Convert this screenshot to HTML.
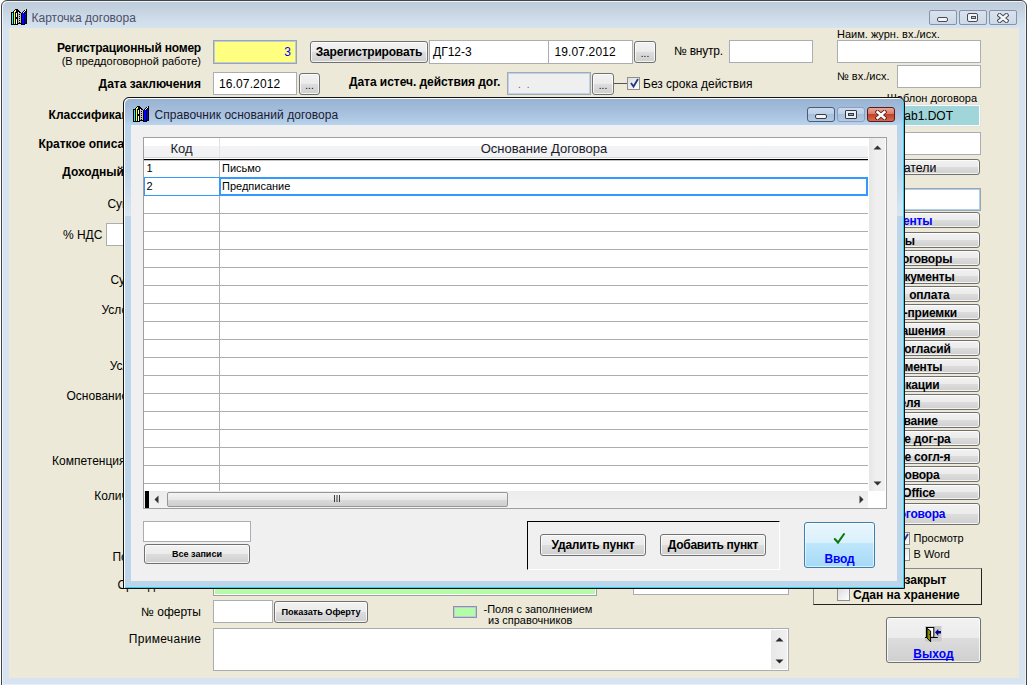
<!DOCTYPE html>
<html><head><meta charset="utf-8">
<style>
*{box-sizing:border-box;margin:0;padding:0}
html,body{width:1031px;height:685px;overflow:hidden;background:#fff;font-family:"Liberation Sans",sans-serif;color:#000}
.a{position:absolute}
.win{left:1px;top:0;width:1026px;height:700px;border:1px solid #444;border-radius:6px 6px 0 0;box-shadow:inset 1px 1px 0 #eef3f9,inset -1px 0 0 #eef3f9;background:linear-gradient(#bccbdb 0,#c2d0de 6px,#cfdcea 18px,#d6e3f1 28px,#d7e3f1 100%)}
.client{left:9px;top:28px;width:1010px;height:650px;background:#ECE9D8}
.tb{background:#fff;border:1px solid #abadb3}
.lbl{font-size:12px;white-space:nowrap;line-height:14px}
.b{font-weight:bold;letter-spacing:-0.2px}
.btn{border:1px solid #707070;border-radius:3px;box-shadow:inset 0 0 0 1px rgba(255,255,255,.75);background:linear-gradient(#f2f2f2 0,#ebebeb 50%,#dddddd 50%,#cfcfcf 100%);font-size:12px;text-align:center;white-space:nowrap}
.r{text-align:right}
.capb{border:1px solid #8592aa;border-radius:2px;background:linear-gradient(#d9e3ef 0,#d3deea 50%,#cdd9e7 100%)}
.dcap{border:1px solid #4e5b74;border-radius:3px;background:linear-gradient(#cadbee 0,#bcd0e8 45%,#a6bfdc 50%,#b5cbe4 100%)}
.chk{width:13px;height:13px;border:1px solid #8f8f8f;background:linear-gradient(135deg,#dcdcdc,#fff)}
</style></head><body>
<div class="a win"></div>
<div class="a client"></div>
<div class="a" style="left:2px;top:684px;width:1024px;height:1px;background:#e9eff7"></div>
<div class="a lbl" style="left:31.5px;top:10.5px;color:#4c4f66">Карточка договора</div>
<!-- main window title controls -->
<div class="a capb" style="left:929px;top:10px;width:28px;height:15px"><div class="a" style="left:7px;top:6px;width:11px;height:5px;border:1px solid #454b58;background:#f4f4f4;border-radius:2px"></div></div>
<div class="a capb" style="left:959px;top:10px;width:28px;height:15px"><div class="a" style="left:7px;top:2px;width:11px;height:9px;border:1.5px solid #454b58;background:#f4f4f4;border-radius:2px"><div class="a" style="left:2.5px;top:1.5px;width:5px;height:3px;border:1px solid #454b58;background:#b8c4d4"></div></div></div>
<div class="a capb" style="left:989px;top:10px;width:28px;height:15px"><svg class="a" style="left:6.5px;top:2px" width="12" height="10" viewBox="0 0 12 10"><path d="M2.6 2.2 L9.4 7.8 M9.4 2.2 L2.6 7.8" stroke="#454b58" stroke-width="4.4" stroke-linecap="square"/><path d="M2.6 2.2 L9.4 7.8 M9.4 2.2 L2.6 7.8" stroke="#f6f6f6" stroke-width="2.5" stroke-linecap="square"/></svg></div>
<!-- icon main -->
<svg class="a" style="left:11px;top:9px" width="16" height="16" viewBox="0 0 16 16" shape-rendering="crispEdges"><rect x="4" y="0" width="3" height="1" fill="#000"/><rect x="15" y="0" width="1" height="1" fill="#000"/><rect x="3" y="1" width="1" height="1" fill="#000"/><rect x="4" y="1" width="1" height="1" fill="#ffffff"/><rect x="5" y="1" width="3" height="1" fill="#000"/><rect x="13" y="1" width="1" height="1" fill="#000"/><rect x="14" y="1" width="1" height="1" fill="#ffffff"/><rect x="15" y="1" width="1" height="1" fill="#000"/><rect x="2" y="2" width="1" height="1" fill="#000"/><rect x="3" y="2" width="1" height="1" fill="#ffffff"/><rect x="4" y="2" width="1" height="1" fill="#ffff00"/><rect x="5" y="2" width="4" height="1" fill="#000"/><rect x="12" y="2" width="1" height="1" fill="#000"/><rect x="13" y="2" width="1" height="1" fill="#ffffff"/><rect x="14" y="2" width="2" height="1" fill="#000"/><rect x="0" y="3" width="3" height="1" fill="#000"/><rect x="3" y="3" width="1" height="1" fill="#ffff00"/><rect x="4" y="3" width="3" height="1" fill="#000"/><rect x="7" y="3" width="1" height="1" fill="#ffffff"/><rect x="8" y="3" width="2" height="1" fill="#000"/><rect x="11" y="3" width="1" height="1" fill="#000"/><rect x="12" y="3" width="1" height="1" fill="#ffffff"/><rect x="13" y="3" width="1" height="1" fill="#000"/><rect x="14" y="3" width="1" height="1" fill="#0000ff"/><rect x="15" y="3" width="1" height="1" fill="#000"/><rect x="0" y="4" width="1" height="1" fill="#000"/><rect x="1" y="4" width="1" height="1" fill="#00ffff"/><rect x="2" y="4" width="1" height="1" fill="#000"/><rect x="3" y="4" width="1" height="1" fill="#ffff00"/><rect x="4" y="4" width="1" height="1" fill="#000"/><rect x="5" y="4" width="1" height="1" fill="#ffffff"/><rect x="6" y="4" width="1" height="1" fill="#000"/><rect x="7" y="4" width="3" height="1" fill="#c0c0c0"/><rect x="10" y="4" width="1" height="1" fill="#000"/><rect x="11" y="4" width="2" height="1" fill="#0000ff"/><rect x="13" y="4" width="1" height="1" fill="#000"/><rect x="14" y="4" width="1" height="1" fill="#0000ff"/><rect x="15" y="4" width="1" height="1" fill="#000"/><rect x="0" y="5" width="1" height="1" fill="#000"/><rect x="1" y="5" width="1" height="1" fill="#00ffff"/><rect x="2" y="5" width="1" height="1" fill="#000"/><rect x="3" y="5" width="1" height="1" fill="#ffff00"/><rect x="4" y="5" width="1" height="1" fill="#000"/><rect x="5" y="5" width="1" height="1" fill="#ffffff"/><rect x="6" y="5" width="1" height="1" fill="#000"/><rect x="7" y="5" width="1" height="1" fill="#c0c0c0"/><rect x="8" y="5" width="1" height="1" fill="#000"/><rect x="9" y="5" width="1" height="1" fill="#c0c0c0"/><rect x="10" y="5" width="1" height="1" fill="#000"/><rect x="11" y="5" width="2" height="1" fill="#0000ff"/><rect x="13" y="5" width="1" height="1" fill="#000"/><rect x="14" y="5" width="1" height="1" fill="#0000ff"/><rect x="15" y="5" width="1" height="1" fill="#000"/><rect x="0" y="6" width="1" height="1" fill="#000"/><rect x="1" y="6" width="1" height="1" fill="#00ffff"/><rect x="2" y="6" width="1" height="1" fill="#000"/><rect x="3" y="6" width="1" height="1" fill="#ffff00"/><rect x="4" y="6" width="1" height="1" fill="#000"/><rect x="5" y="6" width="1" height="1" fill="#ffffff"/><rect x="6" y="6" width="1" height="1" fill="#000"/><rect x="7" y="6" width="3" height="1" fill="#c0c0c0"/><rect x="10" y="6" width="1" height="1" fill="#000"/><rect x="11" y="6" width="2" height="1" fill="#0000ff"/><rect x="13" y="6" width="1" height="1" fill="#000"/><rect x="14" y="6" width="1" height="1" fill="#0000ff"/><rect x="15" y="6" width="1" height="1" fill="#000"/><rect x="0" y="7" width="1" height="1" fill="#000"/><rect x="1" y="7" width="1" height="1" fill="#00ffff"/><rect x="2" y="7" width="1" height="1" fill="#000"/><rect x="3" y="7" width="1" height="1" fill="#ffff00"/><rect x="4" y="7" width="1" height="1" fill="#000"/><rect x="5" y="7" width="1" height="1" fill="#ffffff"/><rect x="6" y="7" width="1" height="1" fill="#000"/><rect x="7" y="7" width="1" height="1" fill="#c0c0c0"/><rect x="8" y="7" width="1" height="1" fill="#000"/><rect x="9" y="7" width="1" height="1" fill="#c0c0c0"/><rect x="10" y="7" width="1" height="1" fill="#000"/><rect x="11" y="7" width="2" height="1" fill="#0000ff"/><rect x="13" y="7" width="1" height="1" fill="#000"/><rect x="14" y="7" width="1" height="1" fill="#0000ff"/><rect x="15" y="7" width="1" height="1" fill="#000"/><rect x="0" y="8" width="1" height="1" fill="#000"/><rect x="1" y="8" width="1" height="1" fill="#00ffff"/><rect x="2" y="8" width="1" height="1" fill="#000"/><rect x="3" y="8" width="1" height="1" fill="#ffff00"/><rect x="4" y="8" width="3" height="1" fill="#000"/><rect x="7" y="8" width="3" height="1" fill="#c0c0c0"/><rect x="10" y="8" width="1" height="1" fill="#000"/><rect x="11" y="8" width="2" height="1" fill="#0000ff"/><rect x="13" y="8" width="1" height="1" fill="#000"/><rect x="14" y="8" width="1" height="1" fill="#0000ff"/><rect x="15" y="8" width="1" height="1" fill="#000"/><rect x="0" y="9" width="1" height="1" fill="#000"/><rect x="1" y="9" width="1" height="1" fill="#00ffff"/><rect x="2" y="9" width="1" height="1" fill="#000"/><rect x="3" y="9" width="1" height="1" fill="#ffff00"/><rect x="4" y="9" width="3" height="1" fill="#000"/><rect x="7" y="9" width="1" height="1" fill="#c0c0c0"/><rect x="8" y="9" width="1" height="1" fill="#000"/><rect x="9" y="9" width="1" height="1" fill="#c0c0c0"/><rect x="10" y="9" width="1" height="1" fill="#000"/><rect x="11" y="9" width="2" height="1" fill="#0000ff"/><rect x="13" y="9" width="1" height="1" fill="#000"/><rect x="14" y="9" width="1" height="1" fill="#0000ff"/><rect x="15" y="9" width="1" height="1" fill="#000"/><rect x="0" y="10" width="1" height="1" fill="#000"/><rect x="1" y="10" width="1" height="1" fill="#00ffff"/><rect x="2" y="10" width="1" height="1" fill="#000"/><rect x="3" y="10" width="1" height="1" fill="#ffff00"/><rect x="4" y="10" width="1" height="1" fill="#000"/><rect x="5" y="10" width="1" height="1" fill="#ffffff"/><rect x="6" y="10" width="1" height="1" fill="#000"/><rect x="7" y="10" width="3" height="1" fill="#c0c0c0"/><rect x="10" y="10" width="1" height="1" fill="#000"/><rect x="11" y="10" width="2" height="1" fill="#0000ff"/><rect x="13" y="10" width="1" height="1" fill="#000"/><rect x="14" y="10" width="1" height="1" fill="#0000ff"/><rect x="15" y="10" width="1" height="1" fill="#000"/><rect x="0" y="11" width="1" height="1" fill="#000"/><rect x="1" y="11" width="1" height="1" fill="#00ffff"/><rect x="2" y="11" width="1" height="1" fill="#000"/><rect x="3" y="11" width="1" height="1" fill="#ffff00"/><rect x="4" y="11" width="1" height="1" fill="#000"/><rect x="5" y="11" width="1" height="1" fill="#ffffff"/><rect x="6" y="11" width="1" height="1" fill="#000"/><rect x="7" y="11" width="1" height="1" fill="#c0c0c0"/><rect x="8" y="11" width="1" height="1" fill="#000"/><rect x="9" y="11" width="1" height="1" fill="#c0c0c0"/><rect x="10" y="11" width="1" height="1" fill="#000"/><rect x="11" y="11" width="2" height="1" fill="#0000ff"/><rect x="13" y="11" width="1" height="1" fill="#000"/><rect x="14" y="11" width="1" height="1" fill="#0000ff"/><rect x="15" y="11" width="1" height="1" fill="#000"/><rect x="0" y="12" width="1" height="1" fill="#000"/><rect x="1" y="12" width="1" height="1" fill="#00ffff"/><rect x="2" y="12" width="1" height="1" fill="#000"/><rect x="3" y="12" width="1" height="1" fill="#ffff00"/><rect x="4" y="12" width="1" height="1" fill="#000"/><rect x="5" y="12" width="1" height="1" fill="#ffffff"/><rect x="6" y="12" width="1" height="1" fill="#000"/><rect x="7" y="12" width="3" height="1" fill="#c0c0c0"/><rect x="10" y="12" width="1" height="1" fill="#000"/><rect x="11" y="12" width="2" height="1" fill="#0000ff"/><rect x="13" y="12" width="1" height="1" fill="#000"/><rect x="14" y="12" width="1" height="1" fill="#0000ff"/><rect x="15" y="12" width="1" height="1" fill="#000"/><rect x="0" y="13" width="1" height="1" fill="#000"/><rect x="1" y="13" width="1" height="1" fill="#00ffff"/><rect x="2" y="13" width="1" height="1" fill="#000"/><rect x="3" y="13" width="1" height="1" fill="#ffff00"/><rect x="4" y="13" width="1" height="1" fill="#000"/><rect x="5" y="13" width="1" height="1" fill="#ffffff"/><rect x="6" y="13" width="1" height="1" fill="#000"/><rect x="7" y="13" width="1" height="1" fill="#c0c0c0"/><rect x="8" y="13" width="1" height="1" fill="#000"/><rect x="9" y="13" width="1" height="1" fill="#c0c0c0"/><rect x="10" y="13" width="1" height="1" fill="#000"/><rect x="11" y="13" width="2" height="1" fill="#0000ff"/><rect x="13" y="13" width="1" height="1" fill="#000"/><rect x="14" y="13" width="1" height="1" fill="#0000ff"/><rect x="15" y="13" width="1" height="1" fill="#000"/><rect x="0" y="14" width="1" height="1" fill="#000"/><rect x="1" y="14" width="1" height="1" fill="#00ffff"/><rect x="2" y="14" width="1" height="1" fill="#000"/><rect x="3" y="14" width="1" height="1" fill="#ffff00"/><rect x="4" y="14" width="1" height="1" fill="#000"/><rect x="5" y="14" width="1" height="1" fill="#ffffff"/><rect x="6" y="14" width="5" height="1" fill="#000"/><rect x="11" y="14" width="2" height="1" fill="#0000ff"/><rect x="13" y="14" width="3" height="1" fill="#000"/><rect x="0" y="15" width="7" height="1" fill="#000"/><rect x="10" y="15" width="4" height="1" fill="#000"/></svg>

<!-- row 1 -->
<div class="a lbl b r" style="left:40px;width:161px;top:41px">Регистрационный номер</div>
<div class="a lbl r" style="left:40px;width:161px;top:54.3px;font-size:11px">(В преддоговорной работе)</div>
<div class="a" style="left:213px;top:40px;width:84px;height:24px;background:#ffff80;border:1px solid #a2a2a2;box-shadow:inset 0 0 0 1px #b4cce8"></div>
<div class="a lbl" style="left:213px;top:45px;width:78px;text-align:right;color:#0000ff">3</div>
<div class="a btn b" style="left:310px;top:41px;width:118px;height:22px;line-height:20.5px">Зарегистрировать</div>
<div class="a tb" style="left:429px;top:40px;width:120px;height:24px"></div>
<div class="a lbl" style="left:433px;top:45px">ДГ12-3</div>
<div class="a tb" style="left:548px;top:40px;width:85px;height:24px"></div>
<div class="a lbl" style="left:554.5px;top:45px;letter-spacing:0.12px">19.07.2012</div>
<div class="a btn" style="left:634px;top:41px;width:22px;height:22px;line-height:24px;font-size:10px">...</div>
<div class="a lbl" style="left:674px;top:43.5px;letter-spacing:-0.25px">№ внутр.</div>
<div class="a tb" style="left:729px;top:40px;width:84px;height:23px"></div>

<!-- row 2 -->
<div class="a lbl b r" style="left:40px;width:161px;top:77px;letter-spacing:0">Дата заключения</div>
<div class="a tb" style="left:213px;top:72px;width:84px;height:23px"></div>
<div class="a lbl" style="left:219px;top:77px;letter-spacing:0.12px">16.07.2012</div>
<div class="a btn" style="left:299px;top:73px;width:21px;height:22px;line-height:24px;font-size:10px">...</div>
<div class="a lbl b" style="left:349px;top:74.5px;letter-spacing:-0.05px">Дата истеч. действия дог.</div>
<div class="a" style="left:507px;top:72px;width:84px;height:23px;background:#efefef;border:1px solid #a9a9a9;box-shadow:inset 0 0 0 1px #b5d5f3"></div>
<div class="a lbl" style="left:518px;top:78px;color:#6a5a70;font-size:10px;letter-spacing:1.6px">. .</div>
<div class="a btn" style="left:592px;top:73px;width:22px;height:22px;line-height:24px;font-size:10px">...</div>
<div class="a" style="left:614px;top:83px;width:14px;height:1px;background:#555"></div>
<div class="a chk" style="left:627px;top:77px"><svg class="a" style="left:1px;top:0" width="11" height="11" viewBox="0 0 11 11"><path d="M2 5 L4.5 8.5 L9 1" stroke="#1c3a80" stroke-width="1.8" fill="none"/></svg></div>
<div class="a lbl" style="left:643px;top:76.7px">Без срока действия</div>

<!-- right column top -->
<div class="a lbl" style="left:837px;top:27px;font-size:11px">Наим. журн. вх./исх.</div>
<div class="a tb" style="left:837px;top:40px;width:144px;height:23px"></div>
<div class="a lbl" style="left:837px;top:69px;font-size:11px">№ вх./исх.</div>
<div class="a tb" style="left:897px;top:65px;width:84px;height:23px"></div>
<div class="a lbl r" style="left:800px;width:177px;top:91px;font-size:11px">Шаблон договора</div>
<div class="a" style="left:837px;top:104px;width:144px;height:23px;background:#a0d6da;border:1px solid #e2e2e2;box-shadow:inset 0 0 0 1px #fbfbfb"></div>
<div class="a lbl r" style="left:800px;width:153px;top:109px">CONTtab1.DOT</div>
<div class="a tb" style="left:837px;top:132px;width:144px;height:23px"></div>


<div class="a btn" style="left:813px;top:159px;width:167px;height:16px"></div><div class="a lbl r" style="left:700px;width:236.3px;top:160.5px;font-size:12.3px">Обязатели</div>
<div class="a tb" style="left:837px;top:188px;width:144px;height:23px;border-color:#a4a4a4;box-shadow:inset 0 0 0 1px #a9cff2"></div>
<div class="a btn" style="left:813px;top:212px;width:167px;height:16px"></div><div class="a lbl b r" style="left:700px;width:232.3px;top:213.5px;color:#0000ff">Контрагенты</div>
<div class="a btn" style="left:813px;top:232px;width:167px;height:16px"></div>
<div class="a lbl b r" style="left:700px;width:214.8px;top:233.5px;font-size:12px">Платежи ы</div>
<div class="a btn" style="left:813px;top:250px;width:167px;height:16px"></div>
<div class="a lbl b r" style="left:700px;width:252.2px;top:251.5px;font-size:12px">Доп. договоры</div>
<div class="a btn" style="left:813px;top:268px;width:167px;height:16px"></div>
<div class="a lbl b r" style="left:700px;width:254.5px;top:269.5px;font-size:12px">Прочие документы</div>
<div class="a btn" style="left:813px;top:286px;width:167px;height:16px"></div>
<div class="a lbl b r" style="left:700px;width:249.4px;top:287.5px;font-size:12px">Плановая&nbsp;&nbsp;оплата</div>
<div class="a btn" style="left:813px;top:304px;width:167px;height:16px"></div>
<div class="a lbl b r" style="left:700px;width:256.9px;top:305.5px;font-size:12px">Акты сдачи-приемки</div>
<div class="a btn" style="left:813px;top:322px;width:167px;height:16px"></div>
<div class="a lbl b r" style="left:700px;width:245.2px;top:323.5px;font-size:12px">Доп. соглашения</div>
<div class="a btn" style="left:813px;top:340px;width:167px;height:16px"></div>
<div class="a lbl b r" style="left:700px;width:250.6px;top:341.5px;font-size:12px">Протоколы разногласий</div>
<div class="a btn" style="left:813px;top:358px;width:167px;height:16px"></div>
<div class="a lbl b r" style="left:700px;width:242.4px;top:359.5px;font-size:12px">Сопр. документы</div>
<div class="a btn" style="left:813px;top:376px;width:167px;height:16px"></div>
<div class="a lbl b r" style="left:700px;width:239.4px;top:377.5px;font-size:12px">Спецификации</div>
<div class="a btn" style="left:813px;top:394px;width:167px;height:16px"></div>
<div class="a lbl b r" style="left:700px;width:220.2px;top:395.5px;font-size:12px">Исполнителя</div>
<div class="a btn" style="left:813px;top:412px;width:167px;height:16px"></div>
<div class="a lbl b r" style="left:700px;width:237.7px;top:413.5px;font-size:12px">Наименование</div>
<div class="a btn" style="left:813px;top:430px;width:167px;height:16px"></div>
<div class="a lbl b r" style="left:700px;width:250.6px;top:431.5px;font-size:12px">Расторжение дог-ра</div>
<div class="a btn" style="left:813px;top:448px;width:167px;height:16px"></div>
<div class="a lbl b r" style="left:700px;width:250.2px;top:449.5px;font-size:12px">Расторжение согл-я</div>
<div class="a btn" style="left:813px;top:466px;width:167px;height:16px"></div>
<div class="a lbl b r" style="left:700px;width:239.4px;top:467.5px;font-size:12px">Текст договора</div>
<div class="a btn" style="left:813px;top:484px;width:167px;height:16px"></div>
<div class="a lbl b r" style="left:700px;width:235.1px;top:485.5px;font-size:12px">Open Office</div>
<div class="a btn" style="left:813px;top:503px;width:167px;height:22px"></div><div class="a lbl b r" style="left:700px;width:245.3px;top:506.5px;color:#0000ff">Печать договора</div>
<div class="a lbl b" style="left:48.6px;top:108px;letter-spacing:0">Классификация договора</div>
<div class="a lbl b" style="left:38.4px;top:137px;letter-spacing:0">Краткое описание договора</div>
<div class="a lbl b" style="left:62.2px;top:165px;letter-spacing:0">Доходный / расходный</div>
<div class="a lbl" style="left:107.4px;top:197px">Сумма договора</div>
<div class="a lbl" style="left:62.9px;top:228px">% НДС</div>
<div class="a tb" style="left:106px;top:223px;width:60px;height:23px"></div>
<div class="a lbl" style="left:110.4px;top:273px">Сумма НДС</div>
<div class="a lbl" style="left:101.5px;top:302.5px">Условия оплаты</div>
<div class="a lbl" style="left:109.7px;top:358.5px">Условия</div>
<div class="a lbl" style="left:66.5px;top:389.3px">Основание договора</div>
<div class="a lbl" style="left:52.1px;top:454px">Компетенция</div>
<div class="a lbl" style="left:94.3px;top:489px">Количество</div>
<div class="a lbl" style="left:112.4px;top:550px">Получатель</div>
<div class="a lbl" style="left:117.4px;top:578px">Срок действия</div>
<div class="a" style="left:213px;top:560px;width:384px;height:36px;background:#b4fca8;border:1px solid #a0a0a0;box-shadow:inset 0 0 0 1px #fff"></div>
<div class="a tb" style="left:633px;top:560px;width:156px;height:35px"></div>
<div class="a lbl r" style="left:40px;width:161px;top:604.5px">№ оферты</div>
<div class="a tb" style="left:213px;top:600px;width:60px;height:23px"></div>
<div class="a btn b" style="left:274px;top:601px;width:94px;height:22px;line-height:20px;font-size:9.2px;letter-spacing:-0.05px">Показать Оферту</div>
<div class="a" style="left:453px;top:606px;width:24px;height:12px;background:#b4fca8;border:1px solid #939393;box-shadow:inset 0 0 0 1px #b4c8f2"></div>
<div class="a lbl" style="left:483.5px;top:604px;font-size:11px;line-height:11.2px">-Поля с заполнением<br><span style="padding-left:4.5px">из справочников</span></div>
<div class="a lbl r" style="left:40px;width:161.3px;top:632px;letter-spacing:0.3px">Примечание</div>
<div class="a tb" style="left:213px;top:628px;width:576px;height:43px"></div>
<div class="a" style="left:771px;top:630px;width:16px;height:39px;background:linear-gradient(90deg,#e8e8e8,#f0f0f0)"></div>
<svg class="a" style="left:775px;top:637px" width="9" height="5"><path d="M0.5 4.5 L4.5 0.5 L8.5 4.5 Z" fill="#2a2a2a"/></svg>
<svg class="a" style="left:775px;top:658.5px" width="9" height="5"><path d="M0.5 0.5 L4.5 4.5 L8.5 0.5 Z" fill="#2a2a2a"/></svg>
<!-- right bottom -->
<div class="a chk" style="left:897px;top:532px"><svg class="a" style="left:1px;top:0" width="11" height="11" viewBox="0 0 11 11"><path d="M2 5 L4.5 8.5 L9 1" stroke="#1c3a80" stroke-width="1.8" fill="none"/></svg></div>
<div class="a lbl" style="left:913.5px;top:530.5px;font-size:11px">Просмотр</div>
<div class="a chk" style="left:897px;top:548px"></div>
<div class="a lbl" style="left:913.5px;top:547px;font-size:11px">В Word</div>
<div class="a" style="left:813px;top:568px;width:169px;height:37px;border:1px solid #888;border-right-color:#222;border-bottom-color:#222"></div>
<div class="a chk" style="left:837px;top:573px"></div>
<div class="a lbl b" style="left:851px;top:573px;letter-spacing:0">Договор закрыт</div>
<div class="a chk" style="left:837px;top:588px"></div>
<div class="a lbl b" style="left:853px;top:588px;letter-spacing:0">Сдан на хранение</div>
<div class="a btn" style="left:886px;top:617px;width:95px;height:46px;background:linear-gradient(#f2f2f2 0,#ebebeb 45%,#dddddd 45%,#cfcfcf 100%)"></div>
<svg class="a" style="left:924px;top:624.5px" width="18" height="18" viewBox="0 0 18 18">
<rect x="1" y="1" width="16.5" height="15.5" fill="#cacaca"/>
<rect x="2.5" y="2.5" width="7.3" height="9.8" fill="#fff" stroke="#000" stroke-width="1"/>
<path d="M1 12.5 H13.8" stroke="#000" stroke-width="1"/>
<path d="M3 3.3 L6.6 6 L6.6 16.8 L3 13 Z" fill="#8a8a00" stroke="#000" stroke-width="1"/>
<rect x="5.3" y="9" width="1" height="1" fill="#000"/>
<path d="M11 7.3 L14.3 4 L14.3 6 L17 6 L17 8.6 L14.3 8.6 L14.3 10.9 Z" fill="#000088"/>
</svg>
<div class="a lbl b" style="left:886px;top:647px;width:95px;text-align:center;color:#0000ff;text-decoration:underline;text-decoration-skip-ink:none;letter-spacing:0.1px">Выход</div>

<div class="a" style="left:123px;top:97px;width:782px;height:492px;border:1px solid #111;border-radius:6px 6px 0 0;background:linear-gradient(#97b1d2 0,#a3bddb 12px,#b2cde7 24px,#bad4ee 27px,#bdd5ea 40px,#bdd5ea 100%);box-shadow:inset 1px 1px 0 #fff,inset -1px -1px 0 #2fd0f0"></div>
<div class="a" style="left:131px;top:125px;width:766px;height:456px;background:#F0F0F0"></div>
<div class="a" style="left:125px;top:170px;width:6px;height:46px;background:linear-gradient(rgba(255,255,255,0),rgba(255,255,255,.4))"></div>
<div class="a" style="left:897px;top:170px;width:6px;height:46px;background:linear-gradient(rgba(255,255,255,0),rgba(255,255,255,.4))"></div>
<svg class="a" style="left:133px;top:106px" width="16" height="16" viewBox="0 0 16 16" shape-rendering="crispEdges"><rect x="4" y="0" width="3" height="1" fill="#000"/><rect x="15" y="0" width="1" height="1" fill="#000"/><rect x="3" y="1" width="1" height="1" fill="#000"/><rect x="4" y="1" width="1" height="1" fill="#ffffff"/><rect x="5" y="1" width="3" height="1" fill="#000"/><rect x="13" y="1" width="1" height="1" fill="#000"/><rect x="14" y="1" width="1" height="1" fill="#ffffff"/><rect x="15" y="1" width="1" height="1" fill="#000"/><rect x="2" y="2" width="1" height="1" fill="#000"/><rect x="3" y="2" width="1" height="1" fill="#ffffff"/><rect x="4" y="2" width="1" height="1" fill="#ffff00"/><rect x="5" y="2" width="4" height="1" fill="#000"/><rect x="12" y="2" width="1" height="1" fill="#000"/><rect x="13" y="2" width="1" height="1" fill="#ffffff"/><rect x="14" y="2" width="2" height="1" fill="#000"/><rect x="0" y="3" width="3" height="1" fill="#000"/><rect x="3" y="3" width="1" height="1" fill="#ffff00"/><rect x="4" y="3" width="3" height="1" fill="#000"/><rect x="7" y="3" width="1" height="1" fill="#ffffff"/><rect x="8" y="3" width="2" height="1" fill="#000"/><rect x="11" y="3" width="1" height="1" fill="#000"/><rect x="12" y="3" width="1" height="1" fill="#ffffff"/><rect x="13" y="3" width="1" height="1" fill="#000"/><rect x="14" y="3" width="1" height="1" fill="#0000ff"/><rect x="15" y="3" width="1" height="1" fill="#000"/><rect x="0" y="4" width="1" height="1" fill="#000"/><rect x="1" y="4" width="1" height="1" fill="#00ffff"/><rect x="2" y="4" width="1" height="1" fill="#000"/><rect x="3" y="4" width="1" height="1" fill="#ffff00"/><rect x="4" y="4" width="1" height="1" fill="#000"/><rect x="5" y="4" width="1" height="1" fill="#ffffff"/><rect x="6" y="4" width="1" height="1" fill="#000"/><rect x="7" y="4" width="3" height="1" fill="#c0c0c0"/><rect x="10" y="4" width="1" height="1" fill="#000"/><rect x="11" y="4" width="2" height="1" fill="#0000ff"/><rect x="13" y="4" width="1" height="1" fill="#000"/><rect x="14" y="4" width="1" height="1" fill="#0000ff"/><rect x="15" y="4" width="1" height="1" fill="#000"/><rect x="0" y="5" width="1" height="1" fill="#000"/><rect x="1" y="5" width="1" height="1" fill="#00ffff"/><rect x="2" y="5" width="1" height="1" fill="#000"/><rect x="3" y="5" width="1" height="1" fill="#ffff00"/><rect x="4" y="5" width="1" height="1" fill="#000"/><rect x="5" y="5" width="1" height="1" fill="#ffffff"/><rect x="6" y="5" width="1" height="1" fill="#000"/><rect x="7" y="5" width="1" height="1" fill="#c0c0c0"/><rect x="8" y="5" width="1" height="1" fill="#000"/><rect x="9" y="5" width="1" height="1" fill="#c0c0c0"/><rect x="10" y="5" width="1" height="1" fill="#000"/><rect x="11" y="5" width="2" height="1" fill="#0000ff"/><rect x="13" y="5" width="1" height="1" fill="#000"/><rect x="14" y="5" width="1" height="1" fill="#0000ff"/><rect x="15" y="5" width="1" height="1" fill="#000"/><rect x="0" y="6" width="1" height="1" fill="#000"/><rect x="1" y="6" width="1" height="1" fill="#00ffff"/><rect x="2" y="6" width="1" height="1" fill="#000"/><rect x="3" y="6" width="1" height="1" fill="#ffff00"/><rect x="4" y="6" width="1" height="1" fill="#000"/><rect x="5" y="6" width="1" height="1" fill="#ffffff"/><rect x="6" y="6" width="1" height="1" fill="#000"/><rect x="7" y="6" width="3" height="1" fill="#c0c0c0"/><rect x="10" y="6" width="1" height="1" fill="#000"/><rect x="11" y="6" width="2" height="1" fill="#0000ff"/><rect x="13" y="6" width="1" height="1" fill="#000"/><rect x="14" y="6" width="1" height="1" fill="#0000ff"/><rect x="15" y="6" width="1" height="1" fill="#000"/><rect x="0" y="7" width="1" height="1" fill="#000"/><rect x="1" y="7" width="1" height="1" fill="#00ffff"/><rect x="2" y="7" width="1" height="1" fill="#000"/><rect x="3" y="7" width="1" height="1" fill="#ffff00"/><rect x="4" y="7" width="1" height="1" fill="#000"/><rect x="5" y="7" width="1" height="1" fill="#ffffff"/><rect x="6" y="7" width="1" height="1" fill="#000"/><rect x="7" y="7" width="1" height="1" fill="#c0c0c0"/><rect x="8" y="7" width="1" height="1" fill="#000"/><rect x="9" y="7" width="1" height="1" fill="#c0c0c0"/><rect x="10" y="7" width="1" height="1" fill="#000"/><rect x="11" y="7" width="2" height="1" fill="#0000ff"/><rect x="13" y="7" width="1" height="1" fill="#000"/><rect x="14" y="7" width="1" height="1" fill="#0000ff"/><rect x="15" y="7" width="1" height="1" fill="#000"/><rect x="0" y="8" width="1" height="1" fill="#000"/><rect x="1" y="8" width="1" height="1" fill="#00ffff"/><rect x="2" y="8" width="1" height="1" fill="#000"/><rect x="3" y="8" width="1" height="1" fill="#ffff00"/><rect x="4" y="8" width="3" height="1" fill="#000"/><rect x="7" y="8" width="3" height="1" fill="#c0c0c0"/><rect x="10" y="8" width="1" height="1" fill="#000"/><rect x="11" y="8" width="2" height="1" fill="#0000ff"/><rect x="13" y="8" width="1" height="1" fill="#000"/><rect x="14" y="8" width="1" height="1" fill="#0000ff"/><rect x="15" y="8" width="1" height="1" fill="#000"/><rect x="0" y="9" width="1" height="1" fill="#000"/><rect x="1" y="9" width="1" height="1" fill="#00ffff"/><rect x="2" y="9" width="1" height="1" fill="#000"/><rect x="3" y="9" width="1" height="1" fill="#ffff00"/><rect x="4" y="9" width="3" height="1" fill="#000"/><rect x="7" y="9" width="1" height="1" fill="#c0c0c0"/><rect x="8" y="9" width="1" height="1" fill="#000"/><rect x="9" y="9" width="1" height="1" fill="#c0c0c0"/><rect x="10" y="9" width="1" height="1" fill="#000"/><rect x="11" y="9" width="2" height="1" fill="#0000ff"/><rect x="13" y="9" width="1" height="1" fill="#000"/><rect x="14" y="9" width="1" height="1" fill="#0000ff"/><rect x="15" y="9" width="1" height="1" fill="#000"/><rect x="0" y="10" width="1" height="1" fill="#000"/><rect x="1" y="10" width="1" height="1" fill="#00ffff"/><rect x="2" y="10" width="1" height="1" fill="#000"/><rect x="3" y="10" width="1" height="1" fill="#ffff00"/><rect x="4" y="10" width="1" height="1" fill="#000"/><rect x="5" y="10" width="1" height="1" fill="#ffffff"/><rect x="6" y="10" width="1" height="1" fill="#000"/><rect x="7" y="10" width="3" height="1" fill="#c0c0c0"/><rect x="10" y="10" width="1" height="1" fill="#000"/><rect x="11" y="10" width="2" height="1" fill="#0000ff"/><rect x="13" y="10" width="1" height="1" fill="#000"/><rect x="14" y="10" width="1" height="1" fill="#0000ff"/><rect x="15" y="10" width="1" height="1" fill="#000"/><rect x="0" y="11" width="1" height="1" fill="#000"/><rect x="1" y="11" width="1" height="1" fill="#00ffff"/><rect x="2" y="11" width="1" height="1" fill="#000"/><rect x="3" y="11" width="1" height="1" fill="#ffff00"/><rect x="4" y="11" width="1" height="1" fill="#000"/><rect x="5" y="11" width="1" height="1" fill="#ffffff"/><rect x="6" y="11" width="1" height="1" fill="#000"/><rect x="7" y="11" width="1" height="1" fill="#c0c0c0"/><rect x="8" y="11" width="1" height="1" fill="#000"/><rect x="9" y="11" width="1" height="1" fill="#c0c0c0"/><rect x="10" y="11" width="1" height="1" fill="#000"/><rect x="11" y="11" width="2" height="1" fill="#0000ff"/><rect x="13" y="11" width="1" height="1" fill="#000"/><rect x="14" y="11" width="1" height="1" fill="#0000ff"/><rect x="15" y="11" width="1" height="1" fill="#000"/><rect x="0" y="12" width="1" height="1" fill="#000"/><rect x="1" y="12" width="1" height="1" fill="#00ffff"/><rect x="2" y="12" width="1" height="1" fill="#000"/><rect x="3" y="12" width="1" height="1" fill="#ffff00"/><rect x="4" y="12" width="1" height="1" fill="#000"/><rect x="5" y="12" width="1" height="1" fill="#ffffff"/><rect x="6" y="12" width="1" height="1" fill="#000"/><rect x="7" y="12" width="3" height="1" fill="#c0c0c0"/><rect x="10" y="12" width="1" height="1" fill="#000"/><rect x="11" y="12" width="2" height="1" fill="#0000ff"/><rect x="13" y="12" width="1" height="1" fill="#000"/><rect x="14" y="12" width="1" height="1" fill="#0000ff"/><rect x="15" y="12" width="1" height="1" fill="#000"/><rect x="0" y="13" width="1" height="1" fill="#000"/><rect x="1" y="13" width="1" height="1" fill="#00ffff"/><rect x="2" y="13" width="1" height="1" fill="#000"/><rect x="3" y="13" width="1" height="1" fill="#ffff00"/><rect x="4" y="13" width="1" height="1" fill="#000"/><rect x="5" y="13" width="1" height="1" fill="#ffffff"/><rect x="6" y="13" width="1" height="1" fill="#000"/><rect x="7" y="13" width="1" height="1" fill="#c0c0c0"/><rect x="8" y="13" width="1" height="1" fill="#000"/><rect x="9" y="13" width="1" height="1" fill="#c0c0c0"/><rect x="10" y="13" width="1" height="1" fill="#000"/><rect x="11" y="13" width="2" height="1" fill="#0000ff"/><rect x="13" y="13" width="1" height="1" fill="#000"/><rect x="14" y="13" width="1" height="1" fill="#0000ff"/><rect x="15" y="13" width="1" height="1" fill="#000"/><rect x="0" y="14" width="1" height="1" fill="#000"/><rect x="1" y="14" width="1" height="1" fill="#00ffff"/><rect x="2" y="14" width="1" height="1" fill="#000"/><rect x="3" y="14" width="1" height="1" fill="#ffff00"/><rect x="4" y="14" width="1" height="1" fill="#000"/><rect x="5" y="14" width="1" height="1" fill="#ffffff"/><rect x="6" y="14" width="5" height="1" fill="#000"/><rect x="11" y="14" width="2" height="1" fill="#0000ff"/><rect x="13" y="14" width="3" height="1" fill="#000"/><rect x="0" y="15" width="7" height="1" fill="#000"/><rect x="10" y="15" width="4" height="1" fill="#000"/></svg>
<div class="a lbl" style="left:154.5px;top:108px;color:#1a1a33;letter-spacing:0.05px">Справочник оснований договора</div>
<div class="a dcap" style="left:807px;top:107px;width:28px;height:15px;border-color:#4e5b74"><div class="a" style="left:7px;top:6px;width:12px;height:5px;border:1px solid #333a48;background:#f4f4f4;border-radius:2px"></div></div>
<div class="a dcap" style="left:837px;top:107px;width:28px;height:15px;border-color:#8aa0bd"><div class="a" style="left:7px;top:2px;width:12px;height:9px;border:1px solid #333a48;background:#eee;border-radius:1px"><div class="a" style="left:2px;top:2px;width:6px;height:3px;border:1px solid #333a48;background:#8da6c4"></div></div></div>
<div class="a" style="left:867px;top:107px;width:28px;height:15px;border:1px solid #5c1a1a;border-radius:3px;background:linear-gradient(#e9a899 0,#dc7a64 45%,#c4412a 50%,#d56a4f 100%)"><svg class="a" style="left:7px;top:2px" width="12" height="10" viewBox="0 0 12 10"><path d="M2.5 2 L9.5 8 M9.5 2 L2.5 8" stroke="#4a2020" stroke-width="4.2" stroke-linecap="square"/><path d="M2.5 2 L9.5 8 M9.5 2 L2.5 8" stroke="#fff" stroke-width="2.4" stroke-linecap="square"/></svg></div>
<div class="a" style="left:143px;top:137px;width:744px;height:372px;background:#fff;border:1px solid #a0a0a0"></div>
<div class="a" style="left:144px;top:138px;width:724px;height:21px;background:linear-gradient(#fff 0,#fff 8px,#f3f3f5 8.5px,#f1f2f4 19px,#d6d6d6 19px,#d6d6d6 20px,#fff 20px)"></div>
<div class="a" style="left:219px;top:138px;width:1px;height:21px;background:#e2e2e2"></div>
<div class="a" style="left:144px;top:159px;width:724px;height:1px;background:#000"></div><div class="a" style="left:144px;top:160px;width:724px;height:1px;background:#555;opacity:.35"></div>
<div class="a lbl" style="left:144px;width:75px;top:142px;font-size:13px;text-align:center;color:#1a1a2a">Код</div>
<div class="a lbl" style="left:220px;width:648px;top:142px;font-size:13px;text-align:center;color:#1a1a2a">Основание Договора</div>
<div class="a" style="left:144px;top:177px;width:724px;height:1px;background:#adadad"></div>
<div class="a" style="left:144px;top:195px;width:724px;height:1px;background:#adadad"></div>
<div class="a" style="left:144px;top:213px;width:724px;height:1px;background:#adadad"></div>
<div class="a" style="left:144px;top:231px;width:724px;height:1px;background:#adadad"></div>
<div class="a" style="left:144px;top:249px;width:724px;height:1px;background:#adadad"></div>
<div class="a" style="left:144px;top:267px;width:724px;height:1px;background:#adadad"></div>
<div class="a" style="left:144px;top:285px;width:724px;height:1px;background:#adadad"></div>
<div class="a" style="left:144px;top:303px;width:724px;height:1px;background:#adadad"></div>
<div class="a" style="left:144px;top:321px;width:724px;height:1px;background:#adadad"></div>
<div class="a" style="left:144px;top:339px;width:724px;height:1px;background:#adadad"></div>
<div class="a" style="left:144px;top:357px;width:724px;height:1px;background:#adadad"></div>
<div class="a" style="left:144px;top:375px;width:724px;height:1px;background:#adadad"></div>
<div class="a" style="left:144px;top:393px;width:724px;height:1px;background:#adadad"></div>
<div class="a" style="left:144px;top:411px;width:724px;height:1px;background:#adadad"></div>
<div class="a" style="left:144px;top:429px;width:724px;height:1px;background:#adadad"></div>
<div class="a" style="left:144px;top:447px;width:724px;height:1px;background:#adadad"></div>
<div class="a" style="left:144px;top:465px;width:724px;height:1px;background:#adadad"></div>
<div class="a" style="left:144px;top:483px;width:724px;height:1px;background:#adadad"></div>
<div class="a" style="left:219px;top:161px;width:1px;height:330px;background:#adadad"></div>
<div class="a lbl" style="left:146.5px;top:161px;font-size:11px">1</div>
<div class="a lbl" style="left:222px;top:161px;font-size:11px">Письмо</div>
<div class="a" style="left:144px;top:177px;width:76px;height:19px;border:1px solid #3399ff;border-width:1.5px 1px 1.5px 1px"></div>
<div class="a" style="left:219px;top:177px;width:649px;height:19px;border:2px solid #3399ff"></div>
<div class="a lbl" style="left:146.5px;top:179px;font-size:11px">2</div>
<div class="a lbl" style="left:222px;top:179px;font-size:11px">Предписание</div>
<div class="a" style="left:869px;top:138px;width:16px;height:353px;background:linear-gradient(90deg,#e6e6e6,#efefef 40%,#f0f0f0)"></div>
<svg class="a" style="left:873px;top:144.5px" width="9" height="5"><path d="M0.5 4.5 L4.5 0.5 L8.5 4.5 Z" fill="#333"/></svg>
<svg class="a" style="left:873px;top:481px" width="9" height="5"><path d="M0.5 0.5 L4.5 4.5 L8.5 0.5 Z" fill="#333"/></svg>
<div class="a" style="left:144px;top:491px;width:724px;height:17px;background:linear-gradient(#ececec,#f2f2f2)"></div>
<div class="a" style="left:868px;top:491px;width:18px;height:17px;background:#fff"></div>
<div class="a" style="left:145px;top:491px;width:4px;height:17px;background:#000"></div>
<svg class="a" style="left:154px;top:495px" width="5" height="9"><path d="M4.5 0.5 L0.5 4.5 L4.5 8.5 Z" fill="#333"/></svg>
<svg class="a" style="left:859px;top:495px" width="5" height="9"><path d="M0.5 0.5 L4.5 4.5 L0.5 8.5 Z" fill="#333"/></svg>
<div class="a" style="left:167px;top:492px;width:341px;height:15px;border:1px solid #979797;border-radius:2px;background:linear-gradient(#f4f4f4 0,#e8e8e8 50%,#dadada 51%,#cfcfcf 100%)"></div>
<svg class="a" style="left:333px;top:495px" width="8" height="8"><path d="M1.5 0 V7 M4 0 V7 M6.5 0 V7" stroke="#3a3a3a" stroke-width="1"/></svg>
<div class="a tb" style="left:143px;top:521px;width:108px;height:21px"></div>
<div class="a btn b" style="left:144px;top:544px;width:106px;height:20px;line-height:18px;font-size:9px;letter-spacing:0">Все записи</div>
<div class="a" style="left:527px;top:521px;width:253px;height:49px;border:1px solid #000;border-right-color:#fff;border-bottom-color:#fff"></div>
<div class="a btn b" style="left:540px;top:534px;width:106px;height:22px;line-height:20px">Удалить пункт</div>
<div class="a btn b" style="left:660px;top:534px;width:106px;height:22px;line-height:20px;letter-spacing:-0.3px">Добавить пункт</div>
<div class="a" style="left:804px;top:522px;width:71px;height:46px;border:1px solid #3c7fb1;border-radius:3px;background:linear-gradient(#eaf6fd 0,#d9f0fc 45%,#bee6fd 46%,#a7d9f5 100%);box-shadow:inset 0 0 0 1px rgba(255,255,255,.6)"></div>
<svg class="a" style="left:833px;top:532px" width="13" height="13" viewBox="0 0 13 13"><path d="M1.8 7 L5 10.5 L11 2" stroke="#0b7a0b" stroke-width="2.1" fill="none" stroke-linecap="round"/></svg>
<div class="a lbl b" style="left:804px;width:71px;top:551.5px;text-align:center;color:#0000ff">Ввод</div>
</body></html>
